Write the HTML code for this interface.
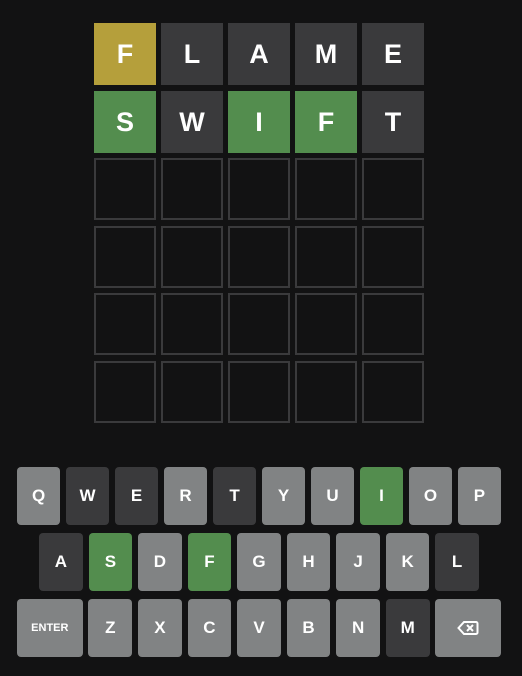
<!DOCTYPE html>
<html><head><style>
body{margin:0;width:522px;height:676px;background:#121213;font-family:"Liberation Sans",sans-serif;position:relative;overflow:hidden}
.t{position:absolute;width:62px;height:62px;box-sizing:border-box;display:flex;align-items:center;justify-content:center;color:#fff;font-weight:bold;font-size:27px}
.e{border:2px solid #3a3a3c}
.y{background:#b59f3b}.g{background:#538d4e}.d{background:#3a3a3c}
.row{position:absolute;left:17px;width:484px;display:flex;gap:5.8px;height:58px}
.k{flex:1;border-radius:4px;background:#818384;color:#fff;font-weight:bold;font-size:17px;display:flex;align-items:center;justify-content:center}
.k.d{background:#3a3a3c}.k.g{background:#538d4e}
.w{flex:1.5;font-size:11px}
</style></head><body>
<div id="grid"></div>
<script>
var rows=[["F","y","L","d","A","d","M","d","E","d"],["S","g","W","d","I","g","F","g","T","d"]];
var ys=[23,91,158,226,293,361],xs=[94,161,228,295,362],h="";
for(var r=0;r<6;r++)for(var c=0;c<5;c++){
 if(r<2)h+='<div class="t '+rows[r][c*2+1]+'" style="left:'+xs[c]+'px;top:'+ys[r]+'px">'+rows[r][c*2]+'</div>';
 else h+='<div class="t e" style="left:'+xs[c]+'px;top:'+ys[r]+'px"></div>';}
document.getElementById("grid").innerHTML=h;
</script>
<div class="row" style="top:467px">
<div class="k">Q</div><div class="k d">W</div><div class="k d">E</div><div class="k">R</div><div class="k d">T</div><div class="k">Y</div><div class="k">U</div><div class="k g">I</div><div class="k">O</div><div class="k">P</div></div>
<div class="row" style="top:533px;left:39px;width:440px">
<div class="k d">A</div><div class="k g">S</div><div class="k">D</div><div class="k g">F</div><div class="k">G</div><div class="k">H</div><div class="k">J</div><div class="k">K</div><div class="k d">L</div></div>
<div class="row" style="top:599px">
<div class="k w">ENTER</div><div class="k">Z</div><div class="k">X</div><div class="k">C</div><div class="k">V</div><div class="k">B</div><div class="k">N</div><div class="k d">M</div><div class="k w"><svg width="22" height="16" viewBox="0 0 22 16"><path d="M7 2H19a1.5 1.5 0 0 1 1.5 1.5V12.5A1.5 1.5 0 0 1 19 14H7L1.5 8Z" fill="none" stroke="#fff" stroke-width="2"/><path d="M10 5L16 11M16 5L10 11" stroke="#fff" stroke-width="2"/></svg></div></div>
</body></html>
